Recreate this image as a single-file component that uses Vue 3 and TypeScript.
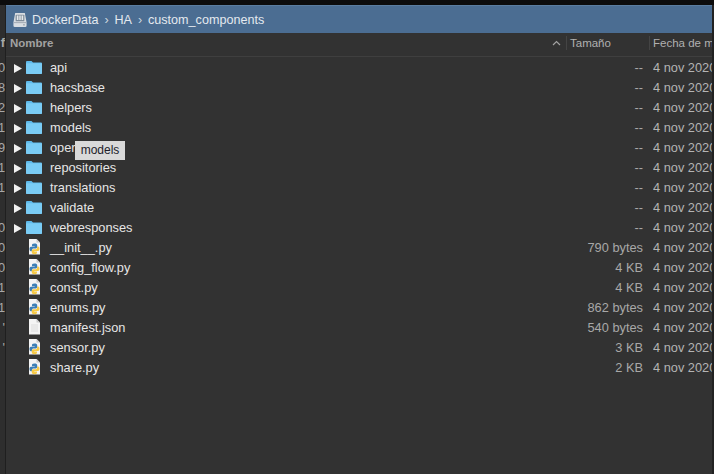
<script setup lang="ts">
interface Row { name: string; size: string; folder?: boolean; kind?: 'py' | 'doc'; clip: string }
const rows: Row[] = [
  { name: 'api', size: '--', folder: true, clip: '0' },
  { name: 'hacsbase', size: '--', folder: true, clip: '8' },
  { name: 'helpers', size: '--', folder: true, clip: '2' },
  { name: 'models', size: '--', folder: true, clip: '1' },
  { name: 'operations', size: '--', folder: true, clip: '9' },
  { name: 'repositories', size: '--', folder: true, clip: '1' },
  { name: 'translations', size: '--', folder: true, clip: '1' },
  { name: 'validate', size: '--', folder: true, clip: '' },
  { name: 'webresponses', size: '--', folder: true, clip: '0' },
  { name: '__init__.py', size: '790 bytes', kind: 'py', clip: '0' },
  { name: 'config_flow.py', size: '4 KB', kind: 'py', clip: '0' },
  { name: 'const.py', size: '4 KB', kind: 'py', clip: '1' },
  { name: 'enums.py', size: '862 bytes', kind: 'py', clip: '1' },
  { name: 'manifest.json', size: '540 bytes', kind: 'doc', clip: "'" },
  { name: 'sensor.py', size: '3 KB', kind: 'py', clip: "'" },
  { name: 'share.py', size: '2 KB', kind: 'py', clip: '' },
]
</script>

<template>
  <div class="window">
    <div class="topbar"></div>
    <div class="body">
      <aside class="sliver">
        <div class="sliver-head">f</div>
        <div v-for="r in rows" :key="r.name" class="sliver-row">{{ r.clip }}</div>
      </aside>
      <main class="pane">
        <nav class="crumbs">
          <svg class="disk" width="14" height="16" viewBox="0 0 16 18" preserveAspectRatio="none">
            <path d="M2.500 1h11l2 10.500v4A1.500 1.500 0 0 1 14 17H2A1.500 1.500 0 0 1 .5 15.500v-4z" fill="#d8dde2" />
            <rect x="3" y="3" width="10" height="7.500" rx="1" fill="#7f8c99" />
            <path d="M5 4v5M7 4v5M9 4v5M11 4v5" stroke="#f0f3f5" stroke-width="1.200" />
            <rect x="1" y="11.500" width="14" height="1" fill="#9aa3ad" />
            <rect x="11.500" y="14" width="2" height="1" fill="#7d8791" />
          </svg>
          <span>DockerData</span>
          <i>›</i>
          <span>HA</span>
          <i>›</i>
          <span>custom_components</span>
        </nav>
        <header class="columns">
          <div class="col-name">
            <span>Nombre</span>
            <svg width="9" height="6" viewBox="0 0 9 6"><path d="M1 5l3.500-3.500L8 5" fill="none" stroke="#a2a2a2" stroke-width="1.200" /></svg>
          </div>
          <div class="col-size">Tamaño</div>
          <div class="col-date">Fecha de modificación</div>
        </header>
        <ul class="list">
          <li v-for="r in rows" :key="r.name" class="row">
            <svg v-if="r.folder" class="arrow" width="8" height="9" viewBox="0 0 8 9"><path d="M0 0l8 4.500L0 9z" fill="#f2f2f2" /></svg>
            <span v-else class="arrow"></span>
            <svg v-if="r.folder" class="icon lift" width="16" height="14" viewBox="0 0 16 14">
              <path d="M0 2a1 1 0 0 1 1-1h4.500l1.500 1.500H15a1 1 0 0 1 1 1V13a1 1 0 0 1-1 1H1a1 1 0 0 1-1-1z" fill="#5fb9ea" />
              <path d="M0 4a.8.800 0 0 1 .8-.8h14.400a.8.800 0 0 1 .8.800v9a1 1 0 0 1-1 1H1a1 1 0 0 1-1-1z" fill="#7accf5" />
            </svg>
            <svg v-else class="icon lift" width="16" height="16" viewBox="0 0 16 16">
              <path d="M3 0h7.500L14 3.500V15.500H3z" fill="#f4f4f4" />
              <path d="M10.500 0v3.500H14z" fill="#c9c9c9" />
              <template v-if="r.kind === 'py'">
                <path d="M8.500 4.500C6.300 4.500 6 5.400 6 6.200v1.100h2.700v.5H5C3.900 7.800 3.500 8.800 3.500 10s.5 2.200 1.400 2.200h1V11c0-.9.800-1.600 1.700-1.600h2.200c.8 0 1.400-.6 1.400-1.300V6.200c0-1-.9-1.700-2.700-1.700z" fill="#3c7eb5" />
                <path d="M8.500 15.200c2.200 0 2.500-.9 2.500-1.700v-1.100H8.300v-.5H12c1.100 0 1.500-1 1.500-2.200s-.5-2.200-1.400-2.200h-1v1.200c0 .9-.8 1.600-1.700 1.600H7.200c-.8 0-1.400.6-1.400 1.300v1.900c0 1 .9 1.700 2.700 1.700z" fill="#f6c945" />
              </template>
              <path v-else d="M5 6h7M5 8h7M5 10h7M5 12h7" stroke="#dcdcdc" stroke-width="1" />
            </svg>
            <span class="name">{{ r.name }}</span>
            <span class="size">{{ r.size }}</span>
            <span class="date">4 nov 2020</span>
          </li>
        </ul>
        <div class="tooltip">models</div>
      </main>
    </div>
  </div>
</template>

<style>
html, body { margin: 0; background: #323232; }
</style>

<style scoped>
.window {
  width: 714px;
  height: 474px;
  display: flex;
  flex-direction: column;
  overflow: hidden;
  background: #323232;
  font-family: "Liberation Sans", Arial, sans-serif;
  font-size: 12.800px;
}
.topbar { height: 5px; flex: none; background: #0c0c0c; }
.body { flex: 1; display: flex; min-height: 0; }
.sliver {
  width: 5px;
  flex: none;
  overflow: hidden;
  background: #2e2e2e;
  color: #a8a8a8;
  border-right: 1px solid #1f1f1f;
}
.sliver-head { height: 20px; margin: 28px 0 5px; line-height: 20px; display: flex; justify-content: flex-end; font-weight: 700; }
.sliver-row { height: 20px; line-height: 20px; display: flex; justify-content: flex-end; }
.pane { position: relative; flex: 1; min-width: 0; border-right: 2px solid #222; overflow: hidden; }
.crumbs {
  height: 28px;
  box-sizing: border-box;
  padding: 0 0 0 7px;
  display: flex;
  align-items: center;
  background: #4b6d92;
  border-top: 1px solid #5a7da0;
  color: #e4e9ef;
  font-size: 12.600px;
}
.disk { margin-right: 5px; flex: none; }
.crumbs i { font-style: normal; width: 16px; padding-left: 6px; box-sizing: border-box; color: #cdd6df; }
.columns {
  height: 24px;
  box-sizing: border-box;
  padding-bottom: 4px;
  display: flex;
  align-items: center;
  border-bottom: 1px solid #3f3f3f;
  color: #b0b0b0;
  font-size: 11.500px;
}
.col-name {
  width: 560px;
  flex: none;
  box-sizing: border-box;
  padding: 0 5px 0 4px;
  display: flex;
  align-items: center;
  justify-content: space-between;
  font-weight: 700;
  color: #a2a2a2;
}
.col-size, .col-date {
  height: 14px;
  line-height: 14px;
  box-sizing: border-box;
  border-left: 1px solid #444;
  padding-left: 3px;
  flex: none;
  white-space: nowrap;
}
.col-size { width: 83px; }
.col-date { width: 80px; overflow: hidden; }
.list { list-style: none; margin: 0; padding: 1px 0 0; }
.row { height: 20px; display: flex; align-items: center; color: #e6e6e6; white-space: nowrap; }
.arrow { width: 8px; margin-left: 8px; flex: none; }
.icon { margin-left: 4px; flex: none; width: 16px; }
.lift { transform: translateY(-1px); }
.name { margin-left: 8px; flex: 1; min-width: 0; padding-bottom: 2px; }
.size { width: 88px; flex: none; text-align: right; color: #a8a8a8; padding-bottom: 2px; }
.date { width: 59px; margin-left: 10px; flex: none; overflow: hidden; color: #b4b4b4; padding-bottom: 2px; }
.tooltip {
  position: absolute;
  left: 69px;
  top: 136px;
  width: 50px;
  height: 19px;
  line-height: 19px;
  text-align: center;
  background: #d9d9d9;
  color: #1d1d2a;
  font-size: 12px;
}
</style>
